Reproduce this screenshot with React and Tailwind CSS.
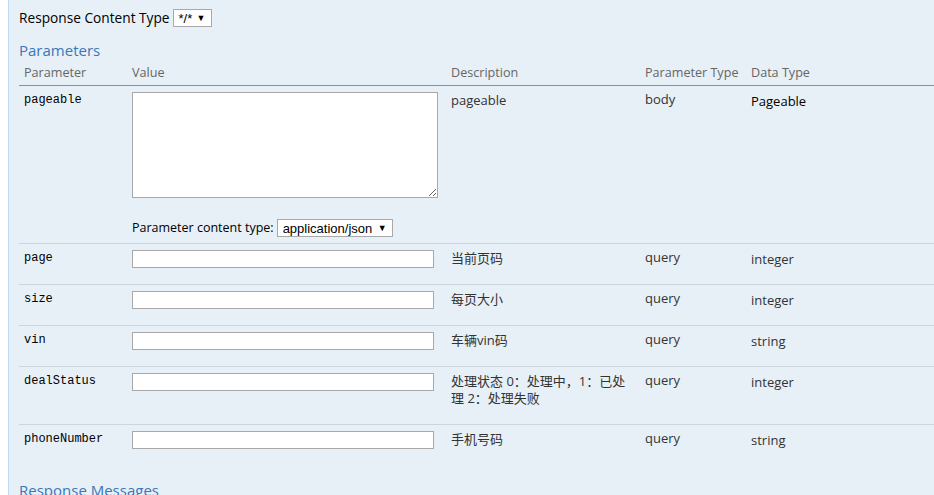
import React from 'react'

const rows = [
    { name: 'page', desc: '当前页码', type: 'query', dataType: 'integer' },
    { name: 'size', desc: '每页大小', type: 'query', dataType: 'integer' },
    { name: 'vin', desc: '车辆vin码', type: 'query', dataType: 'string' },
    { name: 'dealStatus', desc: '处理状态 0：处理中，1：已处理 2：处理失败', type: 'query', dataType: 'integer' },
    { name: 'phoneNumber', desc: '手机号码', type: 'query', dataType: 'string' },
]

const FakeSelect = ({ label, className }) => (
    <div className={`flex items-center h-[18px] border border-[#a9a9a9] bg-white pl-[5px] pr-[5px] font-['Liberation_Sans',Arial,sans-serif] text-[13px] text-black ${className}`}>
        <span className="leading-none">{label}</span>
        <span className="ml-auto text-[9px] leading-none">▼</span>
    </div>
)

const cjk = "font-['Open_Sans','Noto_Sans_CJK_SC',sans-serif]"
const mono = "font-['Liberation_Mono',monospace] text-[12px] leading-[15px] text-black"

const App = () => {
    return (
        <div className={`min-h-screen bg-white pl-[8px] ${cjk}`}>
            <div className="min-h-[495px] border-l border-[#c3d9ec] bg-[#e7f0f7] pl-[10px] pt-[9px]">
                <div className="flex items-center h-[18px] text-[13.7px] text-black">
                    <span>Response Content Type</span>
                    <FakeSelect label="*/*" className="ml-[3px] w-[39px]" />
                </div>

                <h4 className="mt-[13px] text-[15px] leading-[20px] text-[#3a76b8]">Parameters</h4>

                <table className="mt-[4px] w-full table-fixed border-collapse">
                    <colgroup>
                        <col className="w-[108px]" />
                        <col className="w-[319px]" />
                        <col className="w-[194px]" />
                        <col className="w-[106px]" />
                        <col />
                    </colgroup>
                    <thead>
                        <tr className="border-b border-[#8f8f8f] text-left text-[12.6px] leading-[18px] text-[#666]">
                            <th className="px-[5px] pb-[3px] font-normal">Parameter</th>
                            <th className="px-[5px] pb-[3px] font-normal">Value</th>
                            <th className="px-[5px] pb-[3px] font-normal">Description</th>
                            <th className="px-[5px] pb-[3px] font-normal whitespace-nowrap">Parameter Type</th>
                            <th className="px-[5px] pb-[3px] font-normal">Data Type</th>
                        </tr>
                    </thead>
                    <tbody className="text-[13px] text-[#333]">
                        <tr className="border-b border-[#cfd4d8] align-top">
                            <td className={`px-[5px] pt-[7px] ${mono}`}>pageable</td>
                            <td className="px-[5px] pt-[6px] pb-[6px]">
                                <textarea className="block w-[306px] h-[106px] border border-[#a9a9a9] bg-white outline-none" />
                                <div className="mt-[21px] flex items-center h-[18px] text-[12.5px] text-black">
                                    <span>Parameter content type:</span>
                                    <FakeSelect label="application/json" className="ml-[3px] w-[116px]" />
                                </div>
                            </td>
                            <td className="px-[5px] pt-[6px] leading-[17px]">pageable</td>
                            <td className="px-[5px] pt-[5px] leading-[17px]">body</td>
                            <td className="px-[5px] pt-[7px] leading-[17px] text-black">Pageable</td>
                        </tr>
                        {rows.map((row, i) => (
                            <tr key={row.name} className={`align-top ${i < rows.length - 1 ? 'border-b border-[#cfd4d8]' : ''}`}>
                                <td className={`px-[5px] pt-[7px] ${mono}`}>{row.name}</td>
                                <td className="px-[5px] pt-[6px] pb-[16px]">
                                    <input type="text" className="block w-[302px] h-[18px] border border-[#a9a9a9] bg-white outline-none" />
                                </td>
                                <td className="px-[5px] pt-[6px] pb-[17px] leading-[17px]">{row.desc}</td>
                                <td className="px-[5px] pt-[5px] leading-[17px]">{row.type}</td>
                                <td className="px-[5px] pt-[7px] leading-[17px]">{row.dataType}</td>
                            </tr>
                        ))}
                    </tbody>
                </table>

                <h4 className="mt-[15px] text-[15px] leading-[20px] text-[#3a76b8]">Response Messages</h4>
            </div>
        </div>
    )
}

export default App
